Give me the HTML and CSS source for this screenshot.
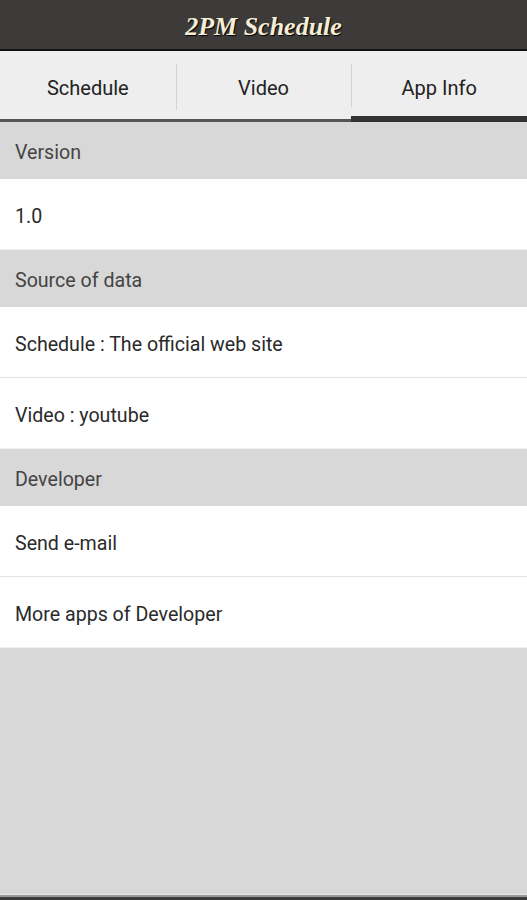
FILE: index.html
```html
<!DOCTYPE html>
<html>
<head>
<meta charset="utf-8">
<link rel="stylesheet" href="styles.css">
</head>
<body>
<div class="app">
  <header class="titlebar"><span class="title">2PM Schedule</span></header>
  <nav class="tabs">
    <div class="tab"><span>Schedule</span></div>
    <div class="tab"><span>Video</span></div>
    <div class="tab active"><span>App Info</span></div>
  </nav>
  <main class="content">
    <div class="section">Version</div>
    <div class="item last">1.0</div>
    <div class="section">Source of data</div>
    <div class="item">Schedule : The official web site</div>
    <div class="item last">Video : youtube</div>
    <div class="section">Developer</div>
    <div class="item">Send e-mail</div>
    <div class="item last">More apps of Developer</div>
    <div class="filler"></div>
  </main>
  <div class="bottombar"></div>
</div>
</body>
</html>
```

FILE: styles.css
```css
* { box-sizing: border-box; }
html, body { margin: 0; padding: 0; }
body {
  width: 527px;
  height: 900px;
  overflow: hidden;
  font-family: Roboto, "Noto Sans", sans-serif;
  background: #d8d8d8;
}
.app {
  display: flex;
  flex-direction: column;
  height: 900px;
}
.titlebar {
  height: 51px;
  background: #3d3b3a;
  border-bottom: 2px solid #111;
  display: flex;
  align-items: center;
  justify-content: center;
  padding-top: 5px;
}
.title {
  font-family: "Liberation Serif", "DejaVu Serif", serif;
  font-weight: bold;
  font-style: italic;
  font-size: 26px;
  color: #f4eed6;
  text-shadow: 1px 1px 1px #000;
}
.tabs {
  display: flex;
  height: 71px;
  background: #eeeeee;
}
.tab {
  flex: 1;
  display: flex;
  align-items: center;
  justify-content: center;
  position: relative;
  border-bottom: 3px solid #555;
  font-size: 20px;
  color: #222;
  padding-top: 6px;
}
.tab + .tab::before {
  content: "";
  position: absolute;
  left: 0;
  top: 13px;
  bottom: 9px;
  width: 1px;
  background: #d4d4d4;
}
.tab.active {
  border-bottom: 6px solid #333;
  padding-top: 9px;
}
.content {
  flex: 1;
  display: flex;
  flex-direction: column;
  background: #d8d8d8;
}
.section {
  height: 57px;
  display: flex;
  align-items: center;
  padding-left: 15px;
  font-size: 19.6px;
  color: #444;
  background: #d8d8d8;
  padding-top: 4px;
}
.item {
  height: 71px;
  display: flex;
  align-items: center;
  padding-left: 15px;
  padding-top: 4px;
  font-size: 19.6px;
  color: #2a2a2a;
  background: #fff;
  border-bottom: 1px solid #e2e2e2;
}
.item.last {
  border-bottom: 1px solid #f0f0f0;
}
.filler { flex: 1; }
.bottombar {
  height: 6px;
  background: linear-gradient(#e4e4e4 0, #e4e4e4 1px, #9a9a9a 1px, #9a9a9a 3px, #444 3px, #333 6px);
}
```
